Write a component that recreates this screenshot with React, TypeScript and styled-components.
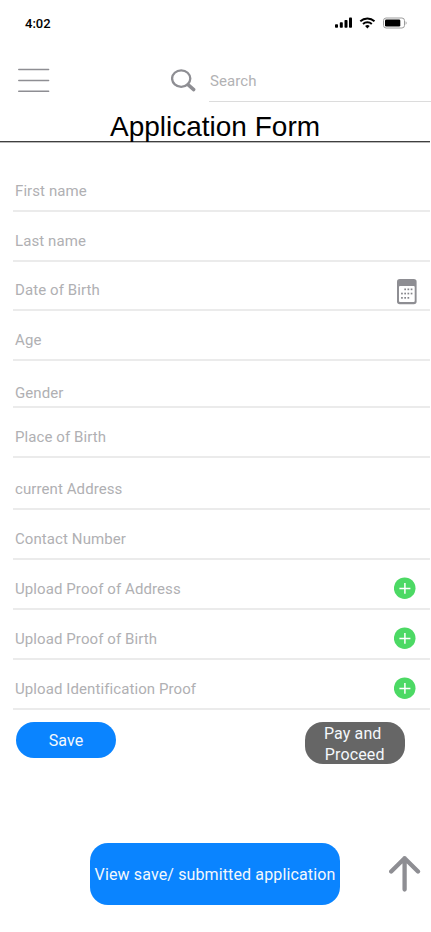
import React from "react";
import styled, { createGlobalStyle } from "styled-components";

const GlobalStyle = createGlobalStyle`
  *, *::before, *::after { box-sizing: border-box; }
  body { margin: 0; background: #fff; }
`;

const Screen = styled.main`
  width: 431px;
  height: 932px;
  overflow: hidden;
  background: #fff;
  font-family: Roboto, sans-serif;
  display: flex;
  flex-direction: column;
`;

const StatusBar = styled.div`
  height: 46px;
  flex: none;
  padding: 0 24px 0 25px;
  display: flex;
  align-items: center;
  justify-content: space-between;
`;

const Clock = styled.span`
  font-size: 13px;
  line-height: 16px;
  font-weight: 500;
  color: #000;
  margin-top: 1px;
`;

const Toolbar = styled.header`
  height: 56px;
  flex: none;
  display: flex;
  align-items: flex-start;
`;

const IconButton = styled.button<{ $left: number; $top: number }>`
  display: block;
  border: 0;
  padding: 0;
  background: none;
  line-height: 0;
  margin: ${(p) => p.$top}px 0 0 ${(p) => p.$left}px;
`;

const SearchField = styled.div`
  flex: 1;
  height: 56px;
  margin-left: 13px;
  padding: 26px 0 0 1px;
  border-bottom: 1px solid #dcdcdc;
  font-size: 15px;
  line-height: 18px;
  letter-spacing: 0.1px;
  color: #b2b2b4;
`;

const Title = styled.h1`
  flex: none;
  width: 430px;
  height: 40px;
  margin: 0 0 1px;
  padding-top: 8px;
  border-bottom: 1px solid #3f3f3f;
  box-shadow: 0 1px 0 #b8b8b8;
  font-family: "Liberation Sans", Arial, sans-serif;
  font-size: 28px;
  line-height: 33px;
  font-weight: 400;
  text-align: center;
  white-space: nowrap;
  color: #000;
`;

const Form = styled.form`
  margin: 19px 1px 0 13px;
  flex: none;
`;

const FieldRow = styled.div<{ $height: number; $gap: number }>`
  height: ${(p) => p.$height}px;
  padding: 0 14px ${(p) => p.$gap}px 2px;
  border-bottom: 2px solid #ebebeb;
  display: flex;
  align-items: flex-end;
  justify-content: space-between;
`;

const FieldLabel = styled.span`
  font-size: 15px;
  line-height: 18px;
  letter-spacing: 0.09px;
  color: #b0b0b3;
`;

const Adornment = styled.span<{ $lift: number; $shift: number }>`
  line-height: 0;
  margin-bottom: ${(p) => p.$lift}px;
  margin-right: ${(p) => p.$shift}px;
`;

const Actions = styled.div`
  flex: none;
  display: flex;
  justify-content: space-between;
  align-items: flex-start;
  padding: 12px 26.5px 0 16px;
`;

const Button = styled.button<{ $w: number; $h: number; $tone?: "grey"; $drop?: number }>`
  width: ${(p) => p.$w}px;
  height: ${(p) => p.$h}px;
  flex: none;
  border: 0;
  padding: ${(p) => p.$drop ?? 0}px 0 0;
  border-radius: 18px;
  background: ${(p) => (p.$tone === "grey" ? "#666" : "#0a84ff")};
  color: #f4f8fc;
  font-family: Roboto, sans-serif;
  font-size: 16px;
  line-height: 21px;
  letter-spacing: 0.13px;
  white-space: pre;
`;

const Footer = styled.footer`
  flex: none;
  margin-top: 78.5px;
  padding-left: 90px;
  display: flex;
  align-items: flex-start;
`;

const MenuIcon = () => (
  <svg width="32" height="24" viewBox="0 0 32 24" stroke="#8e8e93" strokeWidth="1.5" strokeLinecap="round">
    <path d="M0.8 1.5H30.6M0.8 12.5H30.6M0.8 23.3H30.6" />
  </svg>
);

const SearchIcon = () => (
  <svg width="25" height="23" viewBox="0 0 25 23" fill="none" stroke="#8e8e93">
    <ellipse cx="10.2" cy="9.6" rx="9.1" ry="8.3" strokeWidth="2.3" />
    <path d="M17 15.6L22.7 20.6" strokeWidth="3.4" strokeLinecap="round" />
  </svg>
);

const StatusIcons = () => (
  <svg width="72" height="14" viewBox="0 0 72 14">
    <rect x="0" y="8.2" width="3" height="3.5" rx="0.8" />
    <rect x="4.8" y="6.3" width="3" height="5.4" rx="0.8" />
    <rect x="9.5" y="4" width="3" height="7.7" rx="0.8" />
    <rect x="14" y="1.6" width="3" height="10.1" rx="0.8" />
    <g fill="none" stroke="#000" strokeWidth="1.9">
      <path d="M25.3 5.2a10.5 10.5 0 0 1 14.2 0" />
      <path d="M28 8a6.5 6.5 0 0 1 8.8 0" />
    </g>
    <path d="M30.1 10.1a3.3 3.3 0 0 1 4.6 0L32.4 12.5Z" />
    <rect x="48.5" y="2" width="21" height="10" rx="2.6" fill="none" stroke="#9c9c9c" />
    <rect x="50" y="3.5" width="15.3" height="7" rx="1.3" />
    <path d="M70.6 5.3a2 2 0 0 1 0 3.5Z" fill="#9c9c9c" />
  </svg>
);

const CalendarIcon = () => (
  <svg width="20" height="26" viewBox="0 0 20 26">
    <rect x="0" y="0" width="19.6" height="25.3" rx="2.8" fill="#8e8e93" />
    <rect x="2" y="7" width="15.7" height="16" rx="1" fill="#fff" />
    <g fill="#85858a">
      {[7.3, 10.5, 13.7].map((x) => <rect key={x} x={x} y="9.5" width="1.7" height="1.7" />)}
      {[4.1, 7.3, 10.5, 13.7].map((x) => <rect key={x} x={x} y="13.7" width="1.7" height="1.7" />)}
      {[4.1, 7.3, 10.5].map((x) => <rect key={x} x={x} y="18" width="1.7" height="1.7" />)}
    </g>
  </svg>
);

const PlusIcon = () => (
  <svg width="22" height="22" viewBox="0 0 22 22">
    <circle cx="10.7" cy="11.2" r="10.8" fill="#4cd964" />
    <path d="M5.4 11.4H16.4M10.9 6V16.8" stroke="#fff" strokeWidth="1.5" />
  </svg>
);

const ArrowUpIcon = () => (
  <svg width="32" height="37" viewBox="0 0 32 37" fill="none" stroke="#8e8e93" strokeWidth="4.3" strokeLinecap="round" strokeLinejoin="round">
    <path d="M2.2 16.5L15.6 3.2L29 16.5M15.6 3.2V34.5" />
  </svg>
);

type Field = { label: string; height: number; gap?: number; icon?: "calendar" | "plus" };

const fields: Field[] = [
  { label: "First name", height: 50 },
  { label: "Last name", height: 50 },
  { label: "Date of Birth", height: 49, icon: "calendar" },
  { label: "Age", height: 50 },
  { label: "Gender", height: 47, gap: 4 },
  { label: "Place of Birth", height: 50 },
  { label: "current Address", height: 52 },
  { label: "Contact Number", height: 50 },
  { label: "Upload Proof of Address", height: 50, icon: "plus" },
  { label: "Upload Proof of Birth", height: 50, icon: "plus" },
  { label: "Upload Identification Proof", height: 50, icon: "plus" },
];

export default function App() {
  return (
    <Screen>
      <GlobalStyle />
      <StatusBar>
        <Clock>4:02</Clock>
        <StatusIcons />
      </StatusBar>
      <Toolbar>
        <IconButton $left={18} $top={22} aria-label="Menu"><MenuIcon /></IconButton>
        <IconButton $left={121} $top={23} aria-label="Search"><SearchIcon /></IconButton>
        <SearchField>Search</SearchField>
      </Toolbar>
      <Title>Application Form</Title>
      <Form>
        {fields.map((f) => (
          <FieldRow key={f.label} $height={f.height} $gap={f.gap ?? 10}>
            <FieldLabel>{f.label}</FieldLabel>
            {f.icon && (
              <Adornment $lift={f.icon === "plus" ? -1 : -6} $shift={f.icon === "plus" ? 0 : -1}>
                {f.icon === "plus" ? <PlusIcon /> : <CalendarIcon />}
              </Adornment>
            )}
          </FieldRow>
        ))}
      </Form>
      <Actions>
        <Button $w={100} $h={36}>Save</Button>
        <Button $w={99.5} $h={42} $tone="grey" $drop={1}>{"Pay and \nProceed"}</Button>
      </Actions>
      <Footer>
        <Button $w={250} $h={62.5} $drop={1}>View save/ submitted application</Button>
        <IconButton $left={49} $top={12.5} aria-label="Back to top"><ArrowUpIcon /></IconButton>
      </Footer>
    </Screen>
  );
}
